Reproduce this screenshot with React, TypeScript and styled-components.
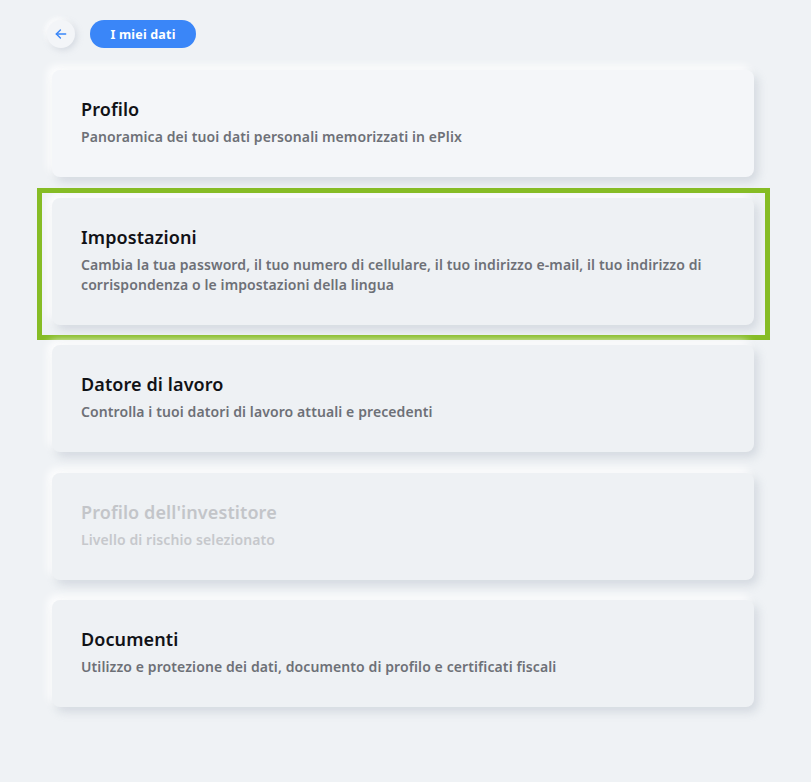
import styled, { createGlobalStyle } from 'styled-components';

const GlobalStyle = createGlobalStyle`
  html, body {
    margin: 0;
    padding: 0;
    background: #eff2f5;
  }
  body {
    font-family: "Noto Sans", "Liberation Sans", sans-serif;
  }
`;

const Page = styled.div`
  min-height: 782px;
  padding: 20px 0 40px 47px;
  box-sizing: border-box;
`;

const Header = styled.div`
  display: flex;
  align-items: center;
  gap: 15px;
`;

const BackButton = styled.button`
  width: 28px;
  height: 28px;
  border: none;
  border-radius: 50%;
  background: #f3f5f8;
  box-shadow: 2px 2px 6px rgba(160, 168, 185, 0.35), -2px -2px 5px #ffffff;
  display: flex;
  align-items: center;
  justify-content: center;
  padding: 0;
  cursor: pointer;
`;

const Pill = styled.div`
  height: 28px;
  width: 106px;
  border-radius: 14px;
  background: #3a86f8;
  color: #fff;
  font-size: 12.5px;
  font-weight: 700;
  letter-spacing: 0.2px;
  display: flex;
  align-items: center;
  justify-content: center;
`;

const List = styled.div`
  display: flex;
  flex-direction: column;
  gap: 20.5px;
  width: 702px;
  margin: 22px 0 0 5px;
`;

const Card = styled.div<{ $light?: boolean; $focused?: boolean }>`
  position: relative;
  background: ${(p) => (p.$light ? '#f4f6f9' : '#eef1f4')};
  border-radius: 8px;
  padding: 27px 29px 30px;
  box-shadow: 4px 5px 10px rgba(150, 158, 175, 0.3), -4px -4px 9px #ffffff;
  ${(p) =>
    p.$focused &&
    `
    &::after {
      content: '';
      position: absolute;
      top: -10px;
      left: -15px;
      right: -16px;
      bottom: -15px;
      border: 5px solid #86bc25;
      pointer-events: none;
    }
  `}
`;

const Title = styled.div<{ $disabled?: boolean }>`
  font-size: 18px;
  font-weight: 600;
  line-height: 24px;
  letter-spacing: 0.1px;
  color: ${(p) => (p.$disabled ? '#c3c5c9' : '#111216')};
  margin-bottom: 6px;
`;

const Desc = styled.div<{ $disabled?: boolean }>`
  font-size: 14px;
  font-weight: 600;
  line-height: 20px;
  letter-spacing: 0.1px;
  color: ${(p) => (p.$disabled ? '#c6c8cc' : '#6d7077')};
  max-width: 660px;
`;

const items = [
  { title: 'Profilo', desc: 'Panoramica dei tuoi dati personali memorizzati in ePlix', light: true },
  {
    title: 'Impostazioni',
    desc: 'Cambia la tua password, il tuo numero di cellulare, il tuo indirizzo e-mail, il tuo indirizzo di corrispondenza o le impostazioni della lingua',
    focused: true,
  },
  { title: 'Datore di lavoro', desc: 'Controlla i tuoi datori di lavoro attuali e precedenti' },
  { title: "Profilo dell'investitore", desc: 'Livello di rischio selezionato', disabled: true },
  { title: 'Documenti', desc: 'Utilizzo e protezione dei dati, documento di profilo e certificati fiscali' },
];

export default function App() {
  return (
    <>
      <GlobalStyle />
      <Page>
        <Header>
          <BackButton aria-label="Indietro">
            <svg width="14" height="14" viewBox="0 0 24 24" fill="none" stroke="#3a86f8" strokeWidth="2.4" strokeLinecap="round" strokeLinejoin="round">
              <path d="M20 12H4" />
              <path d="M11 5l-7 7 7 7" />
            </svg>
          </BackButton>
          <Pill>I miei dati</Pill>
        </Header>
        <List>
          {items.map((it) => (
            <Card key={it.title} $light={it.light} $focused={it.focused}>
              <Title $disabled={it.disabled}>{it.title}</Title>
              <Desc $disabled={it.disabled}>{it.desc}</Desc>
            </Card>
          ))}
        </List>
      </Page>
    </>
  );
}
